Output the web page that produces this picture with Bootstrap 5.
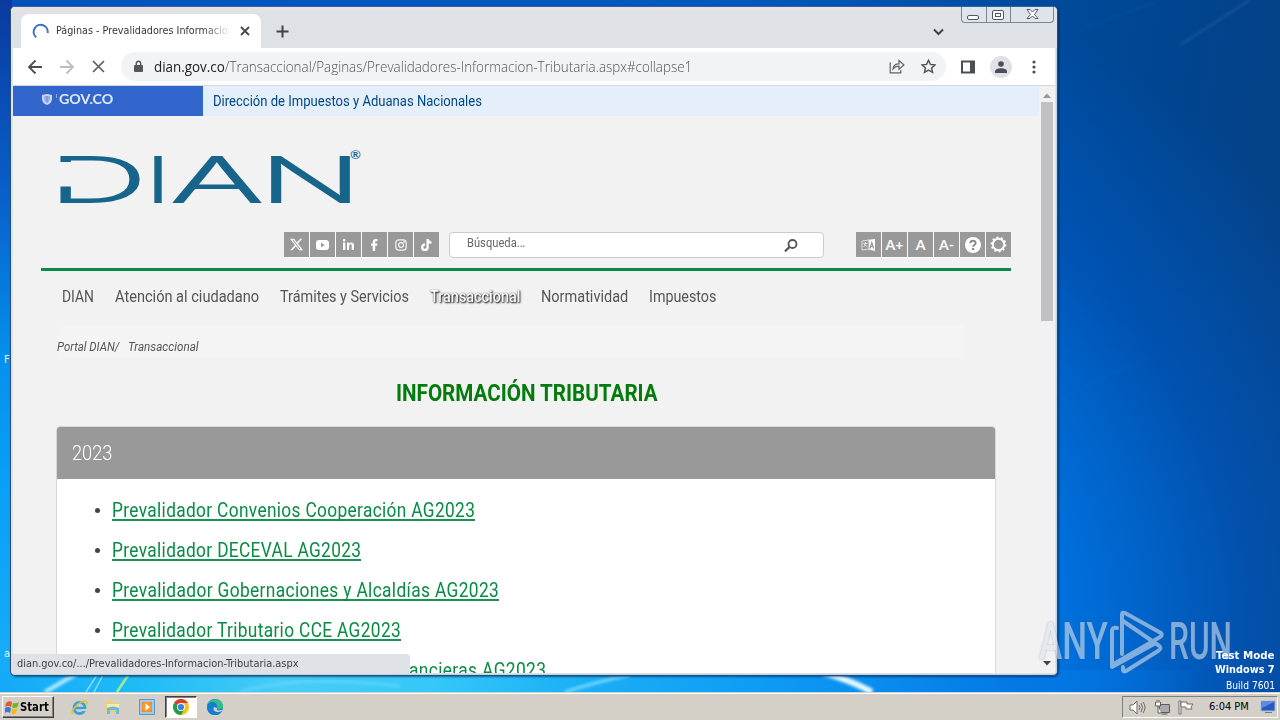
<!DOCTYPE html>
<html lang="es">
<head>
<meta charset="utf-8">
<meta name="viewport" content="width=device-width, initial-scale=1">
<title>Páginas - Prevalidadores Información Tributaria</title>
<link href="https://cdn.jsdelivr.net/npm/bootstrap@5.3.0/dist/css/bootstrap.min.css" rel="stylesheet">
<style>
html, body { width: 1280px; height: 720px; overflow: hidden; }
body { font-family: "DejaVu Sans Condensed", "DejaVu Sans", sans-serif; font-size: 11px; line-height: 14px; background: #0060c8; }
svg { display: block; flex: none; }
.fit { display: inline-block; white-space: nowrap; transform-origin: 0 50%; flex: none; }
.desktop { height: 692px; background:
  radial-gradient(ellipse 1150px 800px at 330px 640px, #00a8f8 0%, #0094f2 35%, #0074e2 62%, rgba(0,92,200,.6) 80%, rgba(0,64,144,0) 100%),
  linear-gradient(100deg, #0048b0 0%, #0058b8 50%, #004590 84%, #083f80 100%); }
.tail { width: 10px; overflow: hidden; color: #e4f3ff; }
.chrome-window { left: 10px; top: 6px; width: 1048px; height: 670px; background: #dee1e6; border: 1px solid #24507f; border-top-color: #2d64a4; border-radius: 5px; padding: 0 2px; box-shadow: inset 1px 0 #f3d9e6, inset -1px -1px #b8d5e6, 1px 1px 2px rgba(0,20,60,.55); overflow: hidden; }
.tabstrip { height: 41px; padding: 7px 0 0 8px; background: linear-gradient(#efe1e3 0, #dee1e6 6px); margin: 0 -2px; padding-left: 10px; }
.page-tab { width: 240px; height: 34px; background: #fff; border-radius: 8px 8px 0 0; padding: 0 11px 0 11px; color: #35363a; }
.tab-name { width: 175px; overflow: hidden; margin-left: 7px; -webkit-mask-image: linear-gradient(90deg,#000 84%,transparent); mask-image: linear-gradient(90deg,#000 84%,transparent); }
.caption { right: 3px; top: -2px; border: 1px solid #7b8596; border-top: 0; border-radius: 0 0 4px 4px; height: 18px; width: 93px; background: #dfe3ea; }
.caption > div { border-right: 1px solid #7b8596; width: 25px; }
.caption > div:last-child { border: 0; width: 42px; }
.toolbar { height: 38px; background: #fff; border-bottom: 1px solid #d5d7da; padding: 0 14px; }
.omni { height: 29px; width: 825px; background: #f1f3f4; border-radius: 15px; padding: 0 10px 0 12px; font-family: "Open Sans", sans-serif; font-weight: 300; font-size: 14.5px; color: #50555a; }
.omni b { font-weight: 400; color: #202124; }
.profile { width: 22px; height: 22px; border-radius: 50%; background: #dee1e6; }
.viewport { height: 587px; background: #f2f2f2; font-family: Roboto, "Liberation Sans", sans-serif; overflow: hidden; }
.site { width: 1026px; flex: none; }
.govbar { height: 30px; background: #e5eefb; color: #004884; font-size: 15px; }
.govlogo { width: 190px; background: #36c; color: #e4eafa; padding: 0 0 4px 28px; font-family: Lato, sans-serif; font-weight: 700; font-size: 14px; }
.brandrow { height: 116px; padding: 32px 0 0 47px; }
.brandrow text { font-family: Inter, sans-serif; font-weight: 200; fill: #17658a; stroke: #17658a; stroke-width: 1.8px; }
.brandrow .reg { font: 700 12px "Liberation Sans", sans-serif; stroke: none; }
.sq { width: 25px; height: 25px; background: #999; color: #fff; font-weight: 700; font-size: 14px; font-family: Lato, sans-serif; }
.tiles { gap: 1px; background: #fbfbfb; }
.finder { width: 375px; height: 26px; background: #fff; border: 1px solid #ccc; border-radius: 4px; margin-left: 10px; margin-right: 32px; padding: 0 25px 0 17px; color: #666; font-size: 12.5px; }
.finder .fit { margin-top: -4px; }
.rule { height: 3px; background: #0a8a4a; margin: 10px 28px 0; }
.sitenav { height: 54px; padding: 0 0 3px 49px; gap: 21px; color: #555; font-size: 16px; }
.sitenav .on { color: #fff; text-shadow: 1px 1px 2px #000, 0 0 1px #333; font-weight: 500; }
.crumbs { width: 908px; height: 32px; margin-left: 44px; background: #f4f4f4; color: #555; font-size: 12.5px; font-style: italic; padding-top: 11px; gap: 9px; }
.title { color: #007b0c; font-weight: 700; font-size: 24px; line-height: 28px; padding: 22px 0 0 383px; margin: 0; height: 69px; }
.years { width: 940px; margin-left: 43px; border: 1px solid #d8d8d8; border-radius: 4px; overflow: hidden; }
.years .card-header { height: 52px; background: #999; color: #fff; font-weight: 300; font-size: 20px; border: 0; border-radius: 0; padding: 0 15px 1px; }
.years ul { margin: 0; padding: 11px 0 0 38px; height: 300px; }
.years li { height: 40px; gap: 12px; }
.years li::before { content: ""; width: 5px; height: 5px; border-radius: 50%; background: #444; flex: none; }
.years a { color: #0a8a43; font-size: 20px; line-height: 24px; text-decoration: none; }
.years a .fit { border-bottom: 2px solid #1a9254; line-height: 18px; letter-spacing: .4px; margin-top: 1px; }
.scroller { width: 16px; padding: 7px 2px 7px 2px; background: #f1f1f1; }
.thumb { width: 12px; height: 219px; background: #c1c1c1; margin-top: 4px; }
.bubble { left: 1px; bottom: 2px; width: 398px; height: 19px; background: #dee1e6; color: #3c4043; border-radius: 0 4px 0 0; padding: 1px 5px 0; }
.mode { right: 5px; top: 648px; color: #fff; font-weight: 700; font-size: 11px; text-align: right; }
.mode div { height: 14px; }
.mode div:first-child { margin-top: 1px; }
.mode div:last-child { height: 17px; font-weight: 400; padding-top: 2px; }
.wm { left: 1036px; top: 608px; opacity: .58; filter: drop-shadow(0 0 1px rgba(60,80,110,.6)); }
.wm text { font-family: Roboto, sans-serif; font-size: 51px; font-weight: 500; fill: #dce5ef; }
.taskbar { height: 28px; background: #d4d0c8; border-top: 1px solid #d4d0c8; box-shadow: inset 0 1px #fff; padding: 2px 2px 1px 2px; color: #000; }
.start { width: 52px; height: 22px; border: 1px solid; border-color: #fff #404040 #404040 #fff; box-shadow: inset -1px -1px #808080; padding-left: 2px; gap: 1px; font-weight: 700; font-size: 12px; }
.active-app { width: 32px; height: 22px; background: #fff; border: 1px solid; border-color: #404040 #fff #fff #404040; box-shadow: inset 1px 1px #808080; margin-left: 10px; margin-right: 10px; }
.tray { width: 156px; height: 22px; border: 1px solid; border-color: #808080 #fff #fff #808080; padding: 0 1px 0 6px; }
</style>
</head>
<body>
<div class="desktop position-relative">
  <svg class="position-absolute top-0 start-0" width="1280" height="692" viewBox="0 0 1280 692" fill="none">
    <defs><linearGradient id="vg" x1="0" y1="0" x2="0" y2="1"><stop stop-color="#0a3aa0"/><stop offset=".3" stop-color="#0863cc"/><stop offset=".52" stop-color="#0590ee"/><stop offset=".7" stop-color="#08a0f6"/><stop offset="1" stop-color="#18aef8"/></linearGradient>
    <linearGradient id="hg"><stop stop-color="#14aaf8"/><stop offset=".12" stop-color="#20bcf6"/><stop offset=".24" stop-color="#48ccf6"/><stop offset=".36" stop-color="#35c8f8"/><stop offset=".48" stop-color="#1cb0f6"/><stop offset=".66" stop-color="#0c98f4"/><stop offset=".85" stop-color="#0478e4"/><stop offset="1" stop-color="#0478e4" stop-opacity="0"/></linearGradient>
    <filter id="soft"><feGaussianBlur stdDeviation="1.5"/></filter></defs>
    <path d="M0 0h12v692H0z" fill="url(#vg)"/>
    <path d="M0 670h1200v22H0z" fill="url(#hg)"/>
    <path d="M45 692L76 674" stroke="#b5ecff" stroke-width="4" filter="url(#soft)"/>
    <path d="M86 692L97 675M94 692l9-17" stroke="#82dcf8" stroke-width="1.5"/>
    <path d="M117 692l12-18" stroke="#9bed96" stroke-width="2.5"/>
    <path d="M240 692q60-18 160-6" stroke="#82e4ff" stroke-width="3" opacity=".4" filter="url(#soft)"/>
    <path d="M565 692q30-10 65-17" stroke="#75d8fb" stroke-width="3" filter="url(#soft)"/>
    <path d="M822 672q28 8 50 20" stroke="#e5f8ff" stroke-width="6" filter="url(#soft)"/>
    <path d="M1180 45L1250 0" stroke="#5684b5" stroke-width="1.5" opacity=".35" filter="url(#soft)"/>
    <path d="M1080 30L1160 0M1060 400L1130 365" stroke="#2576c8" stroke-width="2" opacity=".12" filter="url(#soft)"/>
  </svg>
  <div class="tail position-absolute" style="left:4px;top:353px">F</div>
  <div class="tail position-absolute" style="left:4px;top:647px">a</div>

  <main class="chrome-window position-absolute">
    <div class="tabstrip d-flex">
      <div class="page-tab d-flex align-items-center">
        <svg width="17" height="17" viewBox="0 0 17 17" fill="none" stroke="#3a6fd0" stroke-width="2"><path d="M4.300 14.300A7 7 0 1 1 15.600 10"/></svg>
        <div class="tab-name"><span class="fit" data-w="178">Páginas - Prevalidadores Informacion</span></div>
        <svg class="ms-auto" width="10" height="10" viewBox="0 0 10 10" stroke="#45484d" stroke-width="1.8"><path d="M1 1l8 8M9 1L1 9"/></svg>
      </div>
      <svg style="margin:11px 0 0 15px" width="13" height="13" viewBox="0 0 13 13" stroke="#3f4247" stroke-width="2"><path d="M6.500 .5v12M.5 6.500h12"/></svg>
      <svg style="margin:14px 0 0 644px" width="11" height="8" viewBox="0 0 11 8" fill="none" stroke="#3f4247" stroke-width="2"><path d="M1 1.500l4.500 4.500L10 1.500"/></svg>
    </div>
    <div class="caption position-absolute d-flex">
      <div class="d-flex justify-content-center align-items-center"><svg width="13" height="12" viewBox="0 0 13 12" fill="#fff" stroke="#505866"><rect x=".5" y="7.500" width="11" height="4" rx="1.500"/></svg></div>
      <div class="d-flex justify-content-center align-items-center"><svg width="13" height="12" viewBox="0 0 13 12" fill="#fff" stroke="#505866"><rect x=".5" y="2.500" width="11" height="9" rx="1.500"/><rect x="3.500" y="5.500" width="5" height="3"/></svg></div>
      <div class="d-flex justify-content-center align-items-center"><svg width="13" height="12" viewBox="0 0 13 12" fill="#fff" stroke="#505866"><path d="M1 1.500h3l2.500 2.500L9 1.500h3L8.500 6.500l3.500 4H9L6.500 8 4 10.500H1l3.500-4z"/></svg></div>
    </div>
    <div class="toolbar d-flex align-items-center">
      <svg width="16" height="16" viewBox="0 0 16 16" fill="none" stroke="#4a4d52" stroke-width="1.800"><path d="M15 8H2M8.500 1.500L2 8l6.500 6.500"/></svg>
      <svg class="ms-3" width="16" height="16" viewBox="0 0 16 16" fill="none" stroke="#bbbdc0" stroke-width="1.800"><path d="M1 8h13M7.500 1.500L14 8l-6.500 6.500"/></svg>
      <svg style="margin-left:17px" width="13" height="13" viewBox="0 0 13 13" stroke="#55585d" stroke-width="1.600"><path d="M1 1l11 11M12 1L1 12"/></svg>
      <div class="omni d-flex align-items-center" style="margin-left:16px">
        <svg width="11" height="14" viewBox="0 0 11 14"><path d="M2 5h7a1 1 0 0 1 1 1v5a1 1 0 0 1-1 1H2a1 1 0 0 1-1-1V6a1 1 0 0 1 1-1z" fill="#55595e"/><path d="M3.300 5V3.500a2.200 2.200 0 0 1 4.400 0V5" fill="none" stroke="#55595e" stroke-width="1.400"/></svg>
        <span class="fit" style="margin-left:10px" data-w="538"><b>dian.gov.co</b>/Transaccional/Paginas/Prevalidadores-Informacion-Tributaria.aspx#collapse1</span>
        <svg class="ms-auto" width="16" height="15" viewBox="0 0 16 15" fill="none" stroke="#5f6368" stroke-width="1.200"><path d="M1.200 3.500v10.300h10.600V11"/><path d="M4 10c.3-3.500 2.500-5.200 6-5.200V1.500L15 6l-5 4.300V7.200C7.500 7.100 5.600 8 4 10z"/></svg>
        <svg style="margin-left:16px" width="15" height="15" viewBox="0 0 15 15" fill="none" stroke="#55585d" stroke-width="1.500"><path d="M7.500 1.300l1.900 4.100 4.500.5-3.300 3 .9 4.500-4-2.300-4 2.300.9-4.500-3.300-3 4.500-.5z"/></svg>
      </div>
      <svg style="margin-left:15px" width="14" height="14" viewBox="0 0 14 14"><path d="M0 .5h14v13H0z" fill="#4b4e53"/><path d="M2 2.500h7v9H2z" fill="#fff"/></svg>
      <div class="profile d-flex justify-content-center align-items-center" style="margin-left:15px"><svg width="12" height="12" viewBox="0 0 12 12" fill="#4b4e58"><circle cx="6" cy="3" r="2.800"/><path d="M0 12v-1.500C0 8 3 7.200 6 7.200s6 .8 6 3.300V12z"/></svg></div>
      <svg style="margin-left:20px" width="4" height="14" viewBox="0 0 4 14" fill="#4b4e53"><circle cx="2" cy="2" r="1.600"/><circle cx="2" cy="7" r="1.600"/><circle cx="2" cy="12" r="1.600"/></svg>
    </div>

    <div class="viewport d-flex">
      <div class="site">
        <div class="govbar d-flex align-items-center">
          <div class="govlogo h-100 d-flex align-items-center">
            <svg width="18" height="13" viewBox="0 0 18 13"><path d="M1 2l5-1 5 1v4c0 3-2 5-5 6-3-1-5-3-5-6z" fill="#c8d6f3"/><path d="M3 4h6M3 6h6M4 8h4M6 3v7" stroke="#6b8bd6"/><path d="M15.500 1v4" stroke="#8facea" stroke-width="1"/></svg>
            <span class="fit" data-w="54">GOV.CO</span>
          </div>
          <span class="fit" style="margin-left:10px" data-w="269">Dirección de Impuestos y Aduanas Nacionales</span>
        </div>
        <div class="brandrow">
          <svg class="overflow-visible" width="304" height="58" viewBox="0 0 304 58">
            <text x="-12" y="53.500" font-size="61.500" textLength="99" lengthAdjust="spacingAndGlyphs">D</text>
            <path d="M-3 14h16v24.500H-3z" fill="#f2f2f2"/>
            <text x="85.500" y="53.500" font-size="61.500" textLength="25" lengthAdjust="spacingAndGlyphs">I</text>
            <text x="111" y="53.500" font-size="61.500" textLength="92" lengthAdjust="spacingAndGlyphs">A</text>
            <text x="199" y="53.500" font-size="61.500" textLength="103" lengthAdjust="spacingAndGlyphs">N</text>
            <text class="reg" x="290.500" y="10.500" textLength="10" lengthAdjust="spacingAndGlyphs">®</text>
          </svg>
        </div>
        <div class="d-flex" style="padding-left:271px">
          <div class="tiles d-flex">
            <div class="sq d-flex align-items-center justify-content-center"><svg width="13" height="13" viewBox="0 0 16 16" fill="#fff"><path d="M12.600.8h2.500L9.700 6.900 16 15.200h-4.900L7.200 10.200l-4.400 5H.3l5.800-6.600L0 .8h5.100l3.500 4.600zm-.9 12.900h1.400L4.300 2.200H2.800z"/></svg></div>
            <div class="sq d-flex align-items-center justify-content-center"><svg width="13" height="10" viewBox="0 0 13 10"><rect width="13" height="10" rx="3" fill="#fff"/><path d="M5 2.800v4.400L8.800 5z" fill="#999"/></svg></div>
            <div class="sq d-flex align-items-center justify-content-center"><svg width="11" height="11" viewBox="0 0 11 11" fill="#fff"><path d="M0 3.500h2.300V11H0z"/><circle cx="1.150" cy="1.300" r="1.300"/><path d="M4 3.500h2.200v1C7.500 2.700 11 3 11 6v5H8.700V6.700c0-2-2.500-1.800-2.500 0V11H4z"/></svg></div>
            <div class="sq d-flex align-items-center justify-content-center"><svg width="7" height="12" viewBox="0 0 7 12" fill="#fff"><path d="M1.700 12V6.800H0V4.500h1.700V3C1.700 1 2.900 0 4.800 0h1.700v2.200H5.200c-.8 0-1 .4-1 1v1.300h2.300l-.4 2.300H4.200V12z"/></svg></div>
            <div class="sq d-flex align-items-center justify-content-center"><svg width="12" height="12" viewBox="0 0 12 12" fill="none" stroke="#f4f4f4" stroke-width="1.200"><rect x=".8" y=".8" width="10.400" height="10.400" rx="3"/><circle cx="6" cy="6" r="2.400"/><circle cx="9" cy="3" r=".3"/></svg></div>
            <div class="sq d-flex align-items-center justify-content-center"><svg width="11" height="12" viewBox="0 0 11 12" fill="none" stroke="#fff" stroke-width="2.300"><path d="M6.600 0v8.200a2.700 2.700 0 1 1-2.700-2.700M6.600.5c.2 1.800 1.700 3 3.900 3.100"/></svg></div>
          </div>
          <div class="finder d-flex align-items-center justify-content-between">
            <span class="fit" data-w="59">Búsqueda...</span>
            <svg width="14" height="13" viewBox="0 0 14 13" fill="none" stroke="#555"><circle cx="8.500" cy="5" r="4" stroke-width="1.800"/><path d="M5.500 8L1 12.300" stroke-width="2.300"/></svg>
          </div>
          <div class="tiles d-flex">
            <div class="sq d-flex align-items-center justify-content-center"><svg width="15" height="14" viewBox="0 0 15 14"><path d="M6 2l8-1v12l-8-2z" fill="#fff"/><path d="M1 3l7-1v9l-7 1z" fill="#999" stroke="#ddd"/><path d="M2.500 5.500h4M4.500 4c0 3-1 4-2 5M3.500 6.500l3 2.500" stroke="#eee" fill="none" stroke-width=".8"/><path d="M9 10.500l1.800-6 1.800 6M9.700 8.500h2.300" stroke="#999" fill="none" stroke-width="1.200"/></svg></div>
            <div class="sq d-flex align-items-center justify-content-center"><span>A+</span></div>
            <div class="sq d-flex align-items-center justify-content-center"><span>A</span></div>
            <div class="sq d-flex align-items-center justify-content-center"><span>A-</span></div>
            <div class="sq d-flex align-items-center justify-content-center"><svg width="16" height="16" viewBox="0 0 16 16"><circle cx="8" cy="8" r="8" fill="#fff"/><path d="M5.300 6.300C5.300 2.700 10.700 3 10.600 6.200c0 1.700-2.500 1.800-2.500 3.600" fill="none" stroke="#888" stroke-width="2"/><path d="M7 11h2.200v2H7z" fill="#888"/></svg></div>
            <div class="sq d-flex align-items-center justify-content-center"><svg width="17" height="17" viewBox="0 0 17 17" fill="none" stroke="#fff"><circle cx="8.500" cy="8.500" r="5.700" stroke-width="1.900"/><circle cx="8.500" cy="8.500" r="7" stroke-width="1.800" stroke-dasharray="2 2.400"/></svg></div>
          </div>
        </div>
        <div class="rule"></div>
        <nav class="sitenav d-flex align-items-center">
          <span class="fit" data-w="32">DIAN</span><span class="fit" data-w="144">Atención al ciudadano</span><span class="fit" data-w="129">Trámites y Servicios</span><span class="fit on" data-w="90">Transaccional</span><span class="fit" data-w="87">Normatividad</span><span class="fit" data-w="67" style="margin-left:-1px">Impuestos</span>
        </nav>
        <div class="crumbs d-flex align-items-center"><span class="fit" data-w="62">Portal DIAN/</span><span class="fit" data-w="71">Transaccional</span></div>
        <h1 class="title"><span class="fit" data-w="262">INFORMACIÓN TRIBUTARIA</span></h1>
        <section class="years card">
          <div class="card-header d-flex align-items-center"><span class="fit" data-w="40">2023</span></div>
          <ul class="list-unstyled bg-white">
            <li class="d-flex align-items-center"><a href="#"><span class="fit" data-w="363">Prevalidador Convenios Cooperación AG2023</span></a></li>
            <li class="d-flex align-items-center"><a href="#"><span class="fit" data-w="249">Prevalidador DECEVAL AG2023</span></a></li>
            <li class="d-flex align-items-center"><a href="#"><span class="fit" data-w="387">Prevalidador Gobernaciones y Alcaldías AG2023</span></a></li>
            <li class="d-flex align-items-center"><a href="#"><span class="fit" data-w="289">Prevalidador Tributario CCE AG2023</span></a></li>
            <li class="d-flex align-items-center"><a href="#"><span class="fit" data-w="434">Prevalidador Tributario Entidades Financieras AG2023</span></a></li>
          </ul>
        </section>
      </div>
      <div class="scroller d-flex flex-column align-items-center">
        <svg width="8" height="5" viewBox="0 0 8 5" fill="#999"><path d="M0 5l4-4.500L8 5z"/></svg>
        <div class="thumb"></div>
        <svg class="mt-auto" width="8" height="5" viewBox="0 0 8 5" fill="#444"><path d="M0 0l4 4.500L8 0z"/></svg>
      </div>
    </div>
    <div class="bubble position-absolute d-flex align-items-center"><span class="fit" data-w="282">dian.gov.co/.../Prevalidadores-Informacion-Tributaria.aspx</span></div>
  </main>

  <svg class="wm position-absolute" width="200" height="70" viewBox="0 0 200 70">
    <text x="3" y="51" textLength="69" lengthAdjust="spacingAndGlyphs">ANY</text>
    <text x="133" y="51" textLength="63" lengthAdjust="spacingAndGlyphs">RUN</text>
    <g fill="none" stroke="#dce5ef" stroke-width="4" stroke-linejoin="round" stroke-linecap="round">
      <path d="M81 20q-5-1-5 3v36l42-23"/>
      <path d="M86 46V6q0-2 3-1l36 20q2 2-1 4L76 57"/>
      <path d="M87 59v3q1 2 3 1l32-20q5-3 0-6L87 13"/>
    </g>
  </svg>
  <div class="mode position-absolute"><div><span class="fit" data-w="59">Test Mode</span></div><div><span class="fit" data-w="60">Windows 7</span></div><div><span class="fit" data-w="49">Build 7601</span></div></div>
</div>

<footer class="taskbar d-flex align-items-center">
  <div class="start d-flex align-items-center"><svg width="14" height="15" viewBox="0 0 14 15"><path d="M1 3q3-3 6-1L6 7Q3 5 0 7z" fill="#e8562a"/><path d="M8 3q3 1 6-1l-1.500 5Q9 9 7 7z" fill="#6cb52d"/><path d="M0 8q3-2 6 0l-1 5q-3-2-5 0z" fill="#3a78d8"/><path d="M7 8q3 2 6 0l-2 5q-3 2-5 0z" fill="#f6bb1b"/></svg><span class="fit" data-w="29">Start</span></div>
  <svg style="margin-left:17px" width="17" height="17" viewBox="0 0 17 17" fill="none"><circle cx="8.500" cy="9" r="5.500" stroke="#38a2df" stroke-width="3"/><path d="M4 9h10" stroke="#38a2df" stroke-width="2.500"/><path d="M11 11h5" stroke="#d4d0c8" stroke-width="2"/><path d="M2 15C-2 13 8 2 15 2q2 1 0 4" stroke="#e9bd3b" stroke-width="1.500"/></svg>
  <svg style="margin-left:17px" width="16" height="16" viewBox="0 0 16 16"><path d="M1 2h6l1 2h6v9H1z" fill="#edcf72"/><path d="M2 5h12v4H2z" fill="#f9edae"/><path d="M2 15V9q6-3 12 0v6h-3v-4H5v4z" fill="#6bb9df"/></svg>
  <svg style="margin-left:18px" width="16" height="16" viewBox="0 0 16 16"><path d="M.5.5h15v15H.5z" fill="#a3c8e8" stroke="#5998c8"/><path d="M3 3h10v10H3z" fill="#f18a1c"/><circle cx="8" cy="8" r="4.800" fill="#f69b2d"/><path d="M6.500 4.500v7L11 8z" fill="#fff"/></svg>
  <div class="active-app d-flex align-items-center justify-content-center"><svg width="16" height="16" viewBox="0 0 16 16"><circle cx="8" cy="8" r="8" fill="#fbc116"/><path d="M8 8L1.100 4A8 8 0 0 1 14.900 4H8z" fill="#df3b30"/><path d="M1.100 4A8 8 0 0 0 8 16l3.500-6L8 8z" fill="#279b4c"/><circle cx="8" cy="8" r="4" fill="#fff"/><circle cx="8" cy="8" r="3.100" fill="#3e7de8"/></svg></div>
  <svg width="16" height="16" viewBox="0 0 16 16"><circle cx="8" cy="8" r="8" fill="#1579cb"/><path d="M0 8C0-1 15-3 16 7c0 3-3 4-6 3 2-5-6-7-10-2z" fill="#32bf87"/><path d="M0 8c1-7 10-6 10-1-4-2-5 6 5 5A8 8 0 0 1 0 8z" fill="#1380cf"/><path d="M7 8c-2 3 2 7 8 4 1-1 0-1-1-1-3 1-5 0-4-2z" fill="#d4d0c8"/></svg>
  <div class="tray d-flex align-items-center ms-auto">
    <svg width="17" height="15" viewBox="0 0 17 15" fill="#fff" stroke="#6b6b6b"><path d="M1 5h3l4-4v13l-4-4H1z"/><path d="M10 5q2 2.500 0 5M12 3q3 4.500 0 9M14 2q4 5.500 0 11" fill="none"/></svg>
    <svg class="ms-2" width="16" height="15" viewBox="0 0 16 15" stroke="#5c5c5c"><path d="M5.500 4.500h10v8h-10zM7.500 14h6" fill="#aaa"/><path d="M1.500 2v4h5V2M3 0v3M5 0v3M4 6v7h3" fill="#fff"/></svg>
    <svg class="ms-2" width="16" height="15" viewBox="0 0 16 15" fill="#fff" stroke="#6d6d6d"><path d="M1 1h2v13H1z"/><path d="M3 2h6v2h6l-2 3 1 2H8V7H3z"/></svg>
    <span class="fit" style="margin-left:15px" data-w="40">6:04 PM</span>
    <svg class="ms-auto" width="16" height="14" viewBox="0 0 16 14"><path d="M1 1h14v10H1z" fill="#235abb" stroke="#a7bce0"/><path d="M2 2h12L2 8z" fill="#5b8ce0"/><path d="M5 12h7v1H5z" fill="#777"/></svg>
  </div>
</footer>

<script src="https://cdn.jsdelivr.net/npm/bootstrap@5.3.0/dist/js/bootstrap.bundle.min.js"></script>
<script>
// Condense or widen each label to its intended width, keeping its place in the flow.
document.querySelectorAll('.fit').forEach(function (el) {
  var w = +el.dataset.w, n = el.offsetWidth;
  el.style.transform = 'scaleX(' + w / n + ')';
  el.style.marginRight = (w - n) + 'px';
});
</script>
</body>
</html>
